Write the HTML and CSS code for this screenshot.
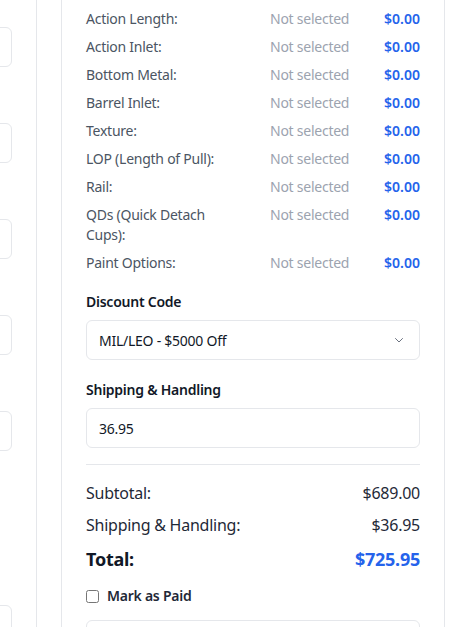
FILE: index.html
```html
<!DOCTYPE html>
<html lang="en">
<head>
<meta charset="utf-8">
<title>Order Summary</title>
<link rel="stylesheet" href="styles.css">
</head>
<body>
<div class="layout">
  <section class="card card-left">
    <div class="box box-1"></div>
    <div class="box box-n"></div>
    <div class="box box-n"></div>
    <div class="box box-n"></div>
    <div class="box box-n"></div>
    <div class="box box-last"></div>
  </section>
  <section class="card card-right">
    <div class="summary-list">
      <div class="summary-row"><span class="s-label">Action Length:</span><span class="s-value">Not selected</span><span class="s-price">$0.00</span></div>
      <div class="summary-row"><span class="s-label">Action Inlet:</span><span class="s-value">Not selected</span><span class="s-price">$0.00</span></div>
      <div class="summary-row"><span class="s-label">Bottom Metal:</span><span class="s-value">Not selected</span><span class="s-price">$0.00</span></div>
      <div class="summary-row"><span class="s-label">Barrel Inlet:</span><span class="s-value">Not selected</span><span class="s-price">$0.00</span></div>
      <div class="summary-row"><span class="s-label">Texture:</span><span class="s-value">Not selected</span><span class="s-price">$0.00</span></div>
      <div class="summary-row"><span class="s-label">LOP (Length of Pull):</span><span class="s-value">Not selected</span><span class="s-price">$0.00</span></div>
      <div class="summary-row"><span class="s-label">Rail:</span><span class="s-value">Not selected</span><span class="s-price">$0.00</span></div>
      <div class="summary-row"><span class="s-label">QDs (Quick Detach Cups):</span><span class="s-value">Not selected</span><span class="s-price">$0.00</span></div>
      <div class="summary-row"><span class="s-label">Paint Options:</span><span class="s-value">Not selected</span><span class="s-price">$0.00</span></div>
    </div>

    <div class="field">
      <label class="field-label">Discount Code</label>
      <div class="select">
        <span>MIL/LEO - $5000 Off</span>
        <svg class="chevron" width="12" height="12" viewBox="0 0 12 12" fill="none"><path d="M2.5 4.5 L6 8 L9.5 4.5" stroke="#6b7280" stroke-width="1" stroke-linecap="round" stroke-linejoin="round"/></svg>
      </div>
    </div>

    <div class="field field-ship">
      <label class="field-label" for="ship">Shipping &amp; Handling</label>
      <input class="text-input" id="ship" type="text" value="36.95">
    </div>

    <hr class="divider">

    <div class="totals">
      <div class="t-row"><span>Subtotal:</span><span>$689.00</span></div>
      <div class="t-row"><span>Shipping &amp; Handling:</span><span>$36.95</span></div>
      <div class="t-row t-total"><span>Total:</span><span class="t-amount">$725.95</span></div>
    </div>

    <label class="paid"><input type="checkbox" class="paid-box"><span>Mark as Paid</span></label>

    <div class="notes"></div>
  </section>
</div>
</body>
</html>
```
FILE: styles.css
```css
html, body {
  margin: 0;
  padding: 0;
  height: 627px;
  overflow: hidden;
  background: #ffffff;
  font-family: "Noto Sans", "Open Sans", sans-serif;
  color: #111827;
  letter-spacing: -0.25px;
}

.layout {
  display: flex;
  align-items: flex-start;
  gap: 24px;
  margin-left: -263px;
  margin-top: -24px;
}

.card {
  background: #ffffff;
  border: 1px solid #e5e7eb;
  border-radius: 8px;
  box-sizing: border-box;
  flex: none;
}

.card-left {
  width: 300px;
  height: 760px;
  padding: 24px;
  display: flex;
  flex-direction: column;
}

.box {
  height: 40px;
  border: 1px solid #e5e7eb;
  border-radius: 6px;
  box-sizing: border-box;
  flex: none;
}
.box-1 { margin-top: 26px; }
.box-n { margin-top: 56px; }
.box-last { margin-top: 154px; }

.card-right {
  width: 384px;
  padding: 32px 24px 24px;
}

.summary-list {
  display: flex;
  flex-direction: column;
  gap: 8px;
}

.summary-row {
  display: grid;
  grid-template-columns: 152px auto 1fr;
  column-gap: 32px;
  font-size: 14px;
  line-height: 20px;
}
.s-label { color: #4b5563; }
.s-value { color: #9ca3af; white-space: nowrap; }
.s-price { color: #2563eb; font-weight: 600; text-align: right; letter-spacing: 0; }

.field { margin-top: 19px; }
.field-ship { margin-top: 20px; }
.field-label {
  display: block;
  font-size: 14px;
  line-height: 20px;
  font-weight: 600;
  color: #111827;
  margin-bottom: 8px;
}

.select {
  height: 40px;
  box-sizing: border-box;
  border: 1px solid #e5e7eb;
  border-radius: 6px;
  padding: 0 14px 0 12px;
  display: flex;
  align-items: center;
  justify-content: space-between;
  font-size: 14px;
  color: #111827;
}

.text-input {
  display: block;
  width: 100%;
  height: 40px;
  box-sizing: border-box;
  border: 1px solid #e5e7eb;
  border-radius: 6px;
  padding: 0 12px;
  font-family: inherit;
  font-size: 14px;
  letter-spacing: inherit;
  color: #111827;
  background: #fff;
  outline: none;
}

.divider {
  border: none;
  border-top: 1px solid #e5e7eb;
  margin: 16px 0;
}

.totals {
  display: flex;
  flex-direction: column;
  gap: 8px;
}
.t-row {
  display: flex;
  justify-content: space-between;
  font-size: 16px;
  line-height: 24px;
  color: #1f2937;
}
.t-total {
  font-size: 18px;
  line-height: 28px;
  font-weight: 700;
  color: #111827;
}
.t-amount { color: #2563eb; }

.paid {
  display: flex;
  align-items: center;
  gap: 8px;
  margin-top: 13px;
  font-size: 14px;
  line-height: 20px;
  font-weight: 600;
  color: #1f2937;
}
.paid-box {
  margin: 0;
  width: 13px;
  height: 13px;
}

.notes {
  margin-top: 14px;
  height: 80px;
  border: 1px solid #e5e7eb;
  border-radius: 6px;
}
```
